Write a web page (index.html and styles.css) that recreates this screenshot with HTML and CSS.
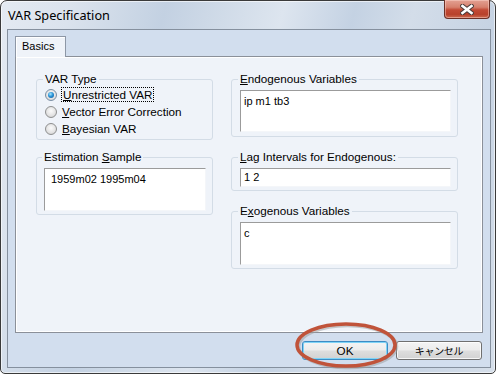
FILE: index.html
```html
<!DOCTYPE html>
<html lang="ja">
<head>
    <meta charset="UTF-8">
    <title>VAR Specification</title>
    <link rel="stylesheet" href="styles.css">
</head>
<body>
    <div class="window">
        <div class="titlebar">
            <span class="title">VAR Specification</span>
            <div class="close">
                <svg width="14" height="11" viewBox="0 0 14 11">
                    <path d="M2.5 2 L11.5 9 M11.5 2 L2.5 9" stroke="#4a3a38" stroke-width="4.6" stroke-linecap="square"/>
                    <path d="M2.5 2 L11.5 9 M11.5 2 L2.5 9" stroke="#ffffff" stroke-width="2.6" stroke-linecap="square"/>
                </svg>
            </div>
        </div>

        <div class="client">
            <div class="tab">Basics</div>
            <div class="panel">
                <div class="col col-left">
                    <fieldset class="group group-type">
                        <legend>VAR Type</legend>
                        <div class="radio-row"><span class="radio on"></span><span class="focus"><u>U</u>nrestricted VAR</span></div>
                        <div class="radio-row"><span class="radio"></span><span><u>V</u>ector Error Correction</span></div>
                        <div class="radio-row"><span class="radio"></span><span><u>B</u>ayesian VAR</span></div>
                    </fieldset>
                    <fieldset class="group group-sample">
                        <legend>Estimation <u>S</u>ample</legend>
                        <div class="textbox tall wide-pad">1959m02 1995m04</div>
                    </fieldset>
                </div>
                <div class="col col-right">
                    <fieldset class="group group-right group-endo">
                        <legend><u>E</u>ndogenous Variables</legend>
                        <div class="textbox endo">ip m1 tb3</div>
                    </fieldset>
                    <fieldset class="group group-right group-gap">
                        <legend><u>L</u>ag Intervals for Endogenous:</legend>
                        <div class="textbox single">1 2</div>
                    </fieldset>
                    <fieldset class="group group-right group-gap">
                        <legend>E<u>x</u>ogenous Variables</legend>
                        <div class="textbox tall">c</div>
                    </fieldset>
                </div>
            </div>
            <div class="buttons">
                <button class="btn btn-ok">OK</button>
                <button class="btn btn-jp">キャンセル</button>
            </div>
        </div>

        <svg class="mark" width="110" height="54" viewBox="0 0 110 54">
            <ellipse cx="55.5" cy="27.5" rx="49" ry="21" fill="none" stroke="#9a9a9a" stroke-opacity="0.5" stroke-width="3.5"/>
            <ellipse cx="54" cy="26" rx="49" ry="21" fill="none" stroke="#c0533a" stroke-width="3.5"/>
        </svg>
    </div>
</body>
</html>
```

FILE: styles.css
```css
body {
    margin: 0;
    background: #ffffff;
    font-family: "Liberation Sans", Arial, sans-serif;
    font-size: 11.7px;
    color: #000000;
}

.window {
    position: relative;
    width: 494px;
    height: 372px;
    border: 1px solid #3a3a3a;
    border-radius: 7px 7px 5px 5px;
    display: flex;
    flex-direction: column;
    background: linear-gradient(105deg, #e4eaf2 0%, #dbe3ed 12%, #c3d1e2 28%, #d0dbe8 38%, #dde5ef 48%, #c4d2e3 60%, #d3dde9 70%, #c6d3e3 84%, #d6dfea 100%);
    box-shadow: inset 0 0 0 1px rgba(255, 255, 255, 0.6);
}

.titlebar {
    height: 28px;
    display: flex;
    align-items: flex-start;
}

.title {
    padding-left: 7px;
    line-height: 29px;
    font-family: "Noto Sans", sans-serif;
    font-size: 12.7px;
}

.close {
    margin-left: auto;
    margin-right: 5px;
    margin-top: -1px;
    width: 44px;
    height: 18px;
    border: 1px solid #6b3027;
    border-top: none;
    border-radius: 0 0 4px 4px;
    background: linear-gradient(#e3a193 0%, #d6806d 40%, #c24a35 55%, #b8412b 80%, #cc6b51 100%);
    box-shadow: inset 0 0 0 1px rgba(255, 220, 210, 0.45);
    display: flex;
    justify-content: center;
    align-items: center;
}

.client {
    margin: 0 4px 5px 6px;
    height: 339px;
    box-sizing: border-box;
    border: 1px solid #85909e;
    background: #d2deee;
    padding: 6px 7px 7px 7px;
    display: flex;
    flex-direction: column;
    align-items: flex-start;
}

.tab {
    position: relative;
    z-index: 1;
    width: 51px;
    height: 21px;
    box-sizing: border-box;
    border: 1px solid #8d97a6;
    border-bottom: none;
    margin-bottom: -1px;
    padding-left: 6px;
    font-size: 11px;
    line-height: 19px;
    background: #eff3f9;
    box-shadow: inset 1px 1px 0 #ffffff;
}

.panel {
    width: 468px;
    height: 277px;
    box-sizing: border-box;
    border: 1px solid #8b9099;
    box-shadow: inset 1px 1px 0 #ffffff, inset -1px -1px 0 #ffffff;
    background: #eff3f9;
    padding: 15px 0 0 20px;
    display: flex;
    gap: 18px;
}

.col {
    display: flex;
    flex-direction: column;
}

.col-left {
    width: 177px;
}

.col-right {
    width: 227px;
}

.group {
    margin: 0;
    padding: 0 6px 3px 7px;
    min-width: 0;
    border: 1px solid #d3dce6;
    border-radius: 3px;
}

.group legend {
    margin-left: -2px;
    padding: 0 2px;
    height: 14px;
    line-height: 14px;
}

.group-type {
    padding: 0 4px 2px 8px;
}

.group-right {
    padding-left: 8px;
}

.group-endo {
    padding-bottom: 4px;
}

.group-sample {
    margin-top: 10px;
}

.group-gap {
    margin-top: 13px;
}

.radio-row {
    height: 17px;
    display: flex;
    align-items: center;
    gap: 5px;
}

.radio {
    position: relative;
    flex: none;
    width: 12px;
    height: 12px;
    box-sizing: border-box;
    border: 1px solid #8e8f8f;
    border-radius: 50%;
    background: radial-gradient(circle at 50% 40%, #fbfbfb 0, #e2e2e2 60%, #c8c8c8 100%);
}

.radio.on {
    border-color: #7a8ea3;
}

.radio.on::after {
    content: "";
    position: absolute;
    left: 2px;
    top: 2px;
    width: 6px;
    height: 6px;
    border-radius: 50%;
    background: radial-gradient(circle at 40% 35%, #a6e6ff 0, #2a93d6 45%, #0b4f92 100%);
}

.focus {
    outline: 1px dotted #000000;
    padding: 0 1px;
    line-height: 13px;
}

.textbox {
    margin-top: 4px;
    box-sizing: border-box;
    background: #ffffff;
    border: 1px solid;
    border-color: #9b9b9b #f4f6f9 #f4f6f9 #9b9b9b;
    padding: 4px 4px 0 3px;
    font-size: 11px;
    line-height: 13px;
}

.tall {
    height: 43px;
}

.endo {
    height: 42px;
}

.single {
    height: 19px;
    padding-top: 2px;
}

.wide-pad {
    padding-left: 6px;
}

.buttons {
    align-self: stretch;
    margin-top: 8px;
    padding-right: 1px;
    display: flex;
    justify-content: flex-end;
    gap: 8px;
}

.btn {
    width: 86px;
    height: 19px;
    padding: 0;
    border: 1px solid #707070;
    border-radius: 3px;
    background: linear-gradient(#f4f4f4 0%, #ececec 48%, #dedede 52%, #d2d2d2 100%);
    box-shadow: inset 0 0 0 1px rgba(255, 255, 255, 0.8);
    font-family: "Liberation Sans", Arial, sans-serif;
    font-size: 11.7px;
    line-height: 16px;
    color: #000000;
}

.btn-ok {
    border-color: #3c8cc4;
    box-shadow: inset 0 0 0 1px #7fd4f7;
}

.btn-jp {
    font-family: "Noto Sans CJK JP", sans-serif;
    font-size: 10px;
    letter-spacing: -0.3px;
}

.mark {
    position: absolute;
    left: 291px;
    top: 318px;
}
```
